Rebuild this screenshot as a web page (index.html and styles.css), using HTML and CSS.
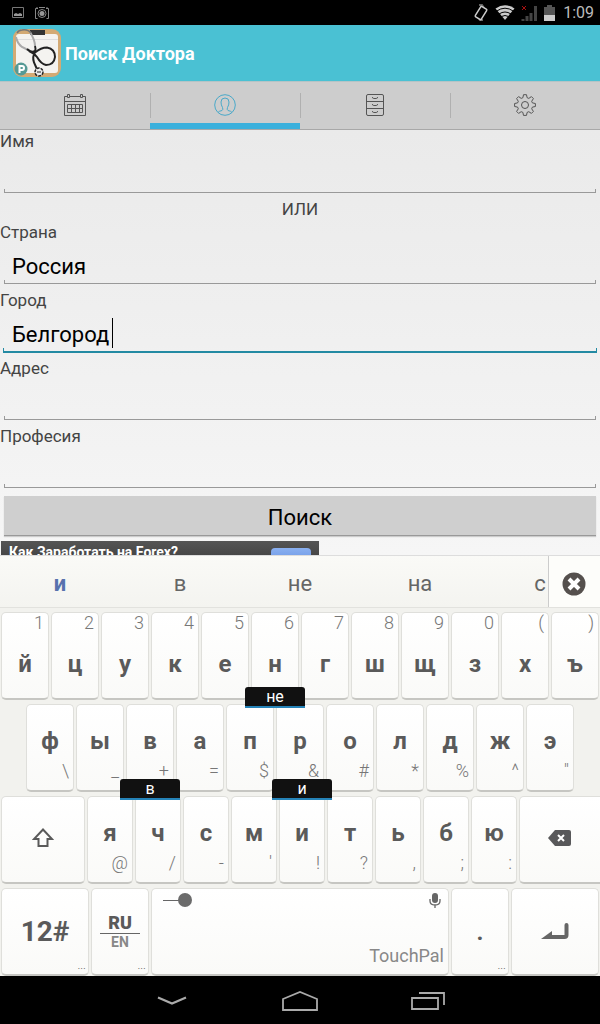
FILE: index.html
```html
<!DOCTYPE html>
<html lang="ru">

<head>
    <meta charset="utf-8">
    <meta name="viewport" content="width=device-width, initial-scale=1">
    <title>Поиск Доктора</title>
    <link rel="stylesheet" href="styles.css">
</head>

<body>
    <div class="statusbar">
        <svg width="12" height="12" viewBox="0 0 12 12"><path d="M.5.5h11v10H.5z" fill="none" stroke="#777" /><path d="M2 9V7l2-1 2 1 2-1 2 1v2z" fill="#999" /></svg>
        <svg width="14" height="13" viewBox="0 0 14 13"><path d="M3 2.500H.5v10h2M11 2.500h2.500v10h-2M4 1.500h6M2 1v2M12 1v2" fill="none" stroke="#888" /><circle cx="7" cy="7.500" r="4" fill="none" stroke="#888" /><circle cx="7" cy="7.500" r="2.500" fill="#999" /></svg>
        <div class="status-right">
            <svg width="16" height="18" viewBox="0 0 16 18"><path d="M6 1h3l2 3M10 16H7l-2-3" fill="none" stroke="#666" stroke-width="2" /><rect x="4.500" y="3" width="7" height="12" rx="1" transform="rotate(32 8 9)" fill="#000" stroke="#ccc" stroke-width="1.500" /></svg>
            <svg width="20" height="15" viewBox="0 0 20 15"><path d="M10 15L.5 3.500Q10-3 19.500 3.500z" fill="#ccc" /><path d="M1.500 6.200q8.500-6 17 0M4 9q6-4 12 0M6.500 11.500q3.500-2 7 0" fill="none" stroke="#000" stroke-width="1" /></svg>
            <svg width="17" height="16" viewBox="0 0 17 16"><path d="M2 16v-2M6 16v-5M10 16V8M14.500 16V1" stroke="#444" stroke-width="3" /><path d="M1 1l4 4M5 1L1 5" stroke="#a11" /></svg>
            <svg width="11" height="16" viewBox="0 0 11 16"><path d="M3 0h5v2h3v8H0V2h3z" fill="#555" /><path d="M0 10h11v6H0z" fill="#ccc" /></svg>
            <span class="clock">1:09</span>
        </div>
    </div>

    <header class="titlebar">
        <svg class="logo" width="48" height="48" viewBox="0 0 48 48">
            <rect width="48" height="48" rx="9" fill="#d3aa74" />
            <rect x="3" y="5" width="42" height="39" rx="3" fill="#f4f3f0" />
            <path d="M3 10.500h42" stroke="#ddd" />
            <path d="M17 1h15v5H17z" fill="#333" />
            <path d="M3 8Q4 14 9 18L17 22M17 3Q22 11 22 17" fill="none" stroke="#aaa" stroke-width="2" />
            <path d="M4 4q2-3 5-3 6-1 9 3" fill="none" stroke="#777" stroke-width="1.500" />
            <path d="M14 20q4 4 8 2 1-2 0-5M16 22q5 2 8 6 4 7 9 8 8 0 9-8 0-8-8-9.500-6 0-12 5-3 4-1 10l4 9" fill="none" stroke="#222" stroke-width="2" />
            <circle cx="26" cy="43" r="4" fill="#eee" stroke="#222" stroke-width="1.500" stroke-dasharray="3 1" />
            <path d="M24 43h4" stroke="#222" />
            <circle cx="8" cy="40" r="6.500" fill="#569a95" />
            <path d="M6.500 44v-7h2.500a2 2 0 0 1 0 4H6.500" fill="none" stroke="#fff" stroke-width="2" />
        </svg>
        <h1>Поиск Доктора</h1>
    </header>

    <nav class="tabs">
        <button type="button" aria-label="Календарь">
            <svg width="22" height="24" viewBox="0 0 22 24" fill="none" stroke="#555"><path d="M3 3.500H.5v19h21v-19H19M6 3.500h10M.5 8.500h21" /><path d="M3.500 1.500h2v3h-2zM16.500 1.500h2v3h-2z" /><path d="M3.500 11.500h15v8h-15zM3.500 15.500h15M7.500 11.500v8M11.500 11.500v8M15.500 11.500v8" /></svg>
        </button>
        <button type="button" class="active" aria-label="Доктор">
            <svg width="22" height="22" viewBox="0 0 22 22" fill="none" stroke="#4aa9c9"><circle cx="11" cy="11" r="10.300" /><path d="M4 18.500q1-1.500 4-2 1.500-1 .5-3Q7 11 7 8q0-4 4-4t4 4q0 3-1.500 5.500-1 2 .5 3 3 .5 4 2" /></svg>
        </button>
        <button type="button" aria-label="Картотека">
            <svg width="18" height="22" viewBox="0 0 18 22" fill="none" stroke="#555"><rect x=".5" y=".5" width="17" height="21" rx="1.500" /><path d="M.5 7.500h17M.5 14.500h17M6.500 3q0 1.500 1 1.500h3q1 0 1-1.500M6.500 10q0 1.500 1 1.500h3q1 0 1-1.500M6.500 17q0 1.500 1 1.500h3q1 0 1-1.500" /></svg>
        </button>
        <button type="button" aria-label="Настройки">
            <svg width="22" height="22" viewBox="0 0 22 22" fill="none" stroke="#555"><path d="M9.500.7h3l.6 3 1.700.7 2.600-1.800 2 2-1.700 2.700.7 1.600 3 .6v3l-3 .6-.7 1.700 1.700 2.600-2 2-2.600-1.700-1.700.7-.6 3h-3l-.6-3-1.700-.7-2.600 1.700-2-2 1.700-2.600-.7-1.700-3-.6v-3l3-.6.7-1.600-1.700-2.700 2-2 2.600 1.800 1.700-.7z" /><circle cx="11" cy="11" r="3.500" /></svg>
        </button>
    </nav>

    <main class="content">
        <form id="searchForm">
            <label for="name">Имя</label>
            <input class="box" id="name" type="text">

            <p class="or">ИЛИ</p>

            <label for="country">Страна</label>
            <input class="box" id="country" type="text" value="Россия">

            <label for="city">Город</label>
            <div class="field">
                <input class="box focused" id="city" type="text" value="Белгород">
                <span class="caret"></span>
            </div>

            <label for="address">Адрес</label>
            <input class="box" id="address" type="text">

            <label for="job">Професия</label>
            <input class="box" id="job" type="text">

            <button class="search" type="button">Поиск</button>
        </form>
        <div class="banner">
            <a href="#">Как Заработать на Forex?</a>
            <span class="banner-button"></span>
        </div>
    </main>

    <section class="keyboard">
        <div class="suggestions">
            <div class="words">
                <button type="button" class="best">и</button>
                <button type="button">в</button>
                <button type="button">не</button>
                <button type="button">на</button>
                <button type="button">с</button>
            </div>
            <button type="button" class="close" aria-label="Закрыть">
                <svg width="24" height="24" viewBox="0 0 24 24"><circle cx="12" cy="12" r="11.500" fill="#55504d" /><path d="M7 7l10 10M17 7L7 17" stroke="#fff" stroke-width="4" /></svg>
            </button>
        </div>

        <div class="keys">
            <div class="row row1">
                <button type="button" class="key">й<small>1</small></button>
                <button type="button" class="key">ц<small>2</small></button>
                <button type="button" class="key">у<small>3</small></button>
                <button type="button" class="key">к<small>4</small></button>
                <button type="button" class="key">е<small>5</small></button>
                <button type="button" class="key">н<small>6</small><span class="popup">не</span></button>
                <button type="button" class="key">г<small>7</small></button>
                <button type="button" class="key">ш<small>8</small></button>
                <button type="button" class="key">щ<small>9</small></button>
                <button type="button" class="key">з<small>0</small></button>
                <button type="button" class="key">х<small>(</small></button>
                <button type="button" class="key">ъ<small>)</small></button>
            </div>
            <div class="row row2">
                <button type="button" class="key">ф<small>\</small></button>
                <button type="button" class="key">ы<small>_</small></button>
                <button type="button" class="key">в<small>+</small><span class="popup">в</span></button>
                <button type="button" class="key">а<small>=</small></button>
                <button type="button" class="key">п<small>$</small></button>
                <button type="button" class="key">р<small>&amp;</small></button>
                <button type="button" class="key">о<small>#</small></button>
                <button type="button" class="key">л<small>*</small></button>
                <button type="button" class="key">д<small>%</small></button>
                <button type="button" class="key">ж<small>^</small></button>
                <button type="button" class="key">э<small>"</small></button>
            </div>
            <div class="row row3">
                <button type="button" class="key icon-key" aria-label="Shift">
                    <svg width="22" height="20" viewBox="0 0 22 20"><path d="M11 1.500L20 11h-4.500v7h-9v-7H2z" fill="none" stroke="#5a5a5a" stroke-width="2" /></svg>
                </button>
                <button type="button" class="key">я<small>@</small></button>
                <button type="button" class="key">ч<small>/</small></button>
                <button type="button" class="key">с<small>-</small></button>
                <button type="button" class="key">м<small>'</small></button>
                <button type="button" class="key">и<small>!</small><span class="popup above">и</span></button>
                <button type="button" class="key">т<small>?</small></button>
                <button type="button" class="key">ь<small>,</small></button>
                <button type="button" class="key">б<small>;</small></button>
                <button type="button" class="key">ю<small>:</small></button>
                <button type="button" class="key icon-key" aria-label="Backspace">
                    <svg width="23" height="16" viewBox="0 0 23 16"><path d="M7 0h14q2 0 2 2v12q0 2-2 2H7L0 8z" fill="#58585a" /><path d="M10 5l6 6M16 5l-6 6" stroke="#fff" stroke-width="2" /></svg>
                </button>
            </div>
            <div class="row row4">
                <button type="button" class="key symbols">12#<i>...</i></button>
                <button type="button" class="key lang"><b>RU</b><span>EN</span><i>...</i></button>
                <button type="button" class="key space">
                    <svg class="slider" width="30" height="14" viewBox="0 0 30 14"><path d="M0 7.500h16" stroke="#666" /><circle cx="22" cy="7" r="7" fill="#6b6b6b" /></svg>
                    <svg class="mic" width="12" height="15" viewBox="0 0 12 15"><rect x="3" y="0" width="6" height="10" rx="3" fill="#666" /><path d="M1 6v2q0 4 5 4t5-4V6M6 12v3" fill="none" stroke="#666" stroke-width="1.300" /></svg>
                    <span class="brand">TouchPal</span>
                </button>
                <button type="button" class="key dot">.<i>...</i></button>
                <button type="button" class="key enter" aria-label="Enter">
                    <svg width="28" height="17" viewBox="0 0 28 17"><path d="M25.500 2v10q0 2-2 2H8" fill="none" stroke="#666" stroke-width="4" stroke-linecap="round" /><path d="M0 16l11-8v8z" fill="#666" /></svg>
                </button>
            </div>
        </div>
    </section>

    <footer class="navbar">
        <button type="button" aria-label="Скрыть">
            <svg width="30" height="10" viewBox="0 0 30 10"><path d="M1 1.500l14 6 14-6" fill="none" stroke="#aaa" stroke-width="2.200" /></svg>
        </button>
        <button type="button" aria-label="Домой">
            <svg width="36" height="20" viewBox="0 0 36 20"><path d="M1 19V8l17-7 17 7v11z" fill="none" stroke="#aaa" stroke-width="1.800" /></svg>
        </button>
        <button type="button" aria-label="Недавние">
            <svg width="34" height="18" viewBox="0 0 34 18"><path d="M1 6h26v11H1zM8 1h25v12" fill="none" stroke="#aaa" stroke-width="1.800" /></svg>
        </button>
    </footer>
</body>

</html>
```
FILE: styles.css
```css
* {
    box-sizing: border-box;
}

body {
    margin: 0;
    height: 100vh;
    display: flex;
    flex-direction: column;
    font-family: Roboto, sans-serif;
    background: #f4f4f4;
}

button {
    font-family: inherit;
    padding: 0;
    border: none;
    background: none;
    cursor: pointer;
}

svg {
    display: block;
}

.statusbar {
    flex: none;
    height: 25px;
    padding: 0 6px 0 12px;
    display: flex;
    align-items: center;
    gap: 11px;
    background: #000;
}

.status-right {
    margin-left: auto;
    display: flex;
    align-items: center;
    gap: 6px;
}

.clock {
    margin-left: 2px;
    font-size: 16px;
    color: #bbb;
}

.titlebar {
    flex: none;
    height: 56px;
    padding-left: 13px;
    display: flex;
    align-items: center;
    gap: 4px;
    background: #4ac1d3;
}

.titlebar h1 {
    margin: 0;
    font-size: 18px;
    color: #fff;
}

.tabs {
    flex: none;
    height: 49px;
    display: flex;
    background: #cdcdcd;
    border-top: 1px solid #b5c4c6;
    border-bottom: 1px solid #a8a8a8;
}

.tabs button {
    flex: 1;
    display: flex;
    align-items: center;
    justify-content: center;
    border-bottom: 6px solid transparent;
    padding-top: 4px;
}

.tabs button + button {
    background: linear-gradient(#b0b0b0, #b0b0b0) left 11px / 1px 25px no-repeat;
}

.tabs .active {
    border-bottom-color: #3bb0dc;
}

.content {
    flex: 1;
    min-height: 0;
    overflow: hidden;
    background: linear-gradient(#eaeaea, #f6f6f6);
}

#searchForm {
    display: flex;
    flex-direction: column;
}

label,
.or {
    margin: 0;
    font-size: 17px;
    line-height: 22px;
    color: #444;
}

.or {
    line-height: 23px;
    text-align: center;
}

/* underline with a short tick at both ends */
.box {
    --line: #999;
    height: 41px;
    margin: 0 4px 5px;
    padding: 6px 8px 0;
    border: none;
    outline: none;
    font-family: inherit;
    font-size: 22px;
    color: #000;
    background:
        linear-gradient(var(--line), var(--line)) left bottom / 1px 4px no-repeat,
        linear-gradient(var(--line), var(--line)) right bottom / 1px 4px no-repeat,
        linear-gradient(var(--line), var(--line)) left bottom / 100% 1px no-repeat;
}

.field {
    position: relative;
    display: flex;
}

.field .box {
    flex: 1;
    height: 42px;
    margin: 0 3px 4px;
    padding: 6px 9px 0;
}

.box.focused {
    --line: #238aa3;
    border-bottom: 1px solid var(--line);
}

.caret {
    position: absolute;
    left: 112px;
    top: 7px;
    width: 1px;
    height: 30px;
    background: #000;
}

.search {
    height: 40px;
    margin: 3px 4px 5px;
    padding-top: 3px;
    font-size: 22px;
    background: #cfcfcf;
    border-bottom: 1px solid #999;
    box-shadow: 0 1px 1px #ccc;
}

.banner {
    width: 318px;
    height: 50px;
    margin-left: 1px;
    padding: 2px 8px;
    display: flex;
    justify-content: space-between;
    background: linear-gradient(#555, #222);
}

.banner a {
    font-size: 14px;
    line-height: 18px;
    font-weight: bold;
    color: #fff;
    text-decoration: none;
}

.banner-button {
    width: 40px;
    height: 30px;
    margin-top: 5px;
    border-radius: 4px;
    background: linear-gradient(#8ab0f0, #4a78d8);
}

.keyboard {
    flex: none;
    background: #f2f2ee;
    border-top: 1px solid #ddd;
}

.suggestions {
    height: 52px;
    display: flex;
    background: linear-gradient(#fafaf7, #f4f4f0);
    border-bottom: 1px solid #e2e2de;
}

.words {
    flex: 1;
    display: flex;
    overflow: hidden;
}

.words button {
    flex: 0 0 20vw;
    font-size: 22px;
    padding-top: 4px;
    color: #666;
}

.words .best {
    font-weight: bold;
    color: #5872ae;
}

.close {
    width: 52px;
    display: flex;
    align-items: center;
    justify-content: center;
    padding: 4px 2px 0 0;
    background: #fdfdfa;
    border-left: 1px solid #ccc;
}

.keys {
    display: grid;
    gap: 4px;
    padding-top: 4px;
    overflow: hidden;
}

.row {
    display: grid;
    height: 88px;
}

.row1 {
    grid-template-columns: repeat(12, 1fr);
}

.row2 {
    grid-template-columns: repeat(11, 1fr);
    margin: 0 calc(100% / 24);
}

.row3 {
    grid-template-columns: 43fr repeat(9, 24fr) 41fr;
}

.row4 {
    grid-template-columns: 9fr 6fr 30fr 6fr 9fr;
}

.key {
    position: relative;
    margin: 0 1px;
    min-width: 0;
    display: flex;
    align-items: center;
    justify-content: center;
    border: 1px solid #dfdfdb;
    border-bottom: 2px solid #c6c6c2;
    border-radius: 5px;
    background: linear-gradient(#fff, #fafaf8);
    font-size: 24px;
    font-weight: bold;
    color: #5a5a5a;
}

.row1 .key {
    padding-top: 16px;
}

.row2 .key,
.row3 .key {
    padding-bottom: 14px;
}

.row3 .icon-key {
    padding-bottom: 4px;
}

/* backspace runs off the right edge */
.row3 .key:last-child {
    margin-right: -4px;
    padding-right: 4px;
}

.key small {
    position: absolute;
    right: 4px;
    bottom: 8px;
    font-size: 18px;
    line-height: 22px;
    font-weight: 300;
    color: #777;
}

.row1 .key small {
    top: -1px;
    bottom: auto;
}

.key i {
    position: absolute;
    right: 2px;
    bottom: 3px;
    font-size: 12px;
    line-height: 12px;
    font-style: normal;
    font-weight: 300;
}

.popup {
    position: absolute;
    z-index: 1;
    left: 50%;
    bottom: -10px;
    width: 60px;
    height: 21px;
    margin-left: -30px;
    border-radius: 3px 3px 0 0;
    border-bottom: 2px solid #2583b8;
    background: #111;
    color: #fff;
    font-size: 16px;
    line-height: 19px;
    font-weight: normal;
}

.popup.above {
    top: -18px;
    bottom: auto;
}

.symbols {
    font-size: 28px;
}

.lang {
    flex-direction: column;
    line-height: 18px;
}

.lang b {
    width: 40px;
    padding-bottom: 1px;
    font-size: 18px;
    border-bottom: 1px solid #666;
}

.lang span {
    font-size: 14px;
    line-height: 16px;
    color: #888;
}

.slider {
    position: absolute;
    left: 11px;
    top: 4px;
}

.mic {
    position: absolute;
    right: 7px;
    top: 4px;
}

.brand {
    position: absolute;
    right: 4px;
    bottom: 8px;
    font-size: 18px;
    font-weight: normal;
    color: #888;
}

.navbar {
    flex: none;
    height: 48px;
    padding-top: 2px;
    display: flex;
    align-items: center;
    justify-content: center;
    background: #000;
}

.navbar button {
    width: 128px;
    height: 46px;
    display: flex;
    align-items: center;
    justify-content: center;
}
```
